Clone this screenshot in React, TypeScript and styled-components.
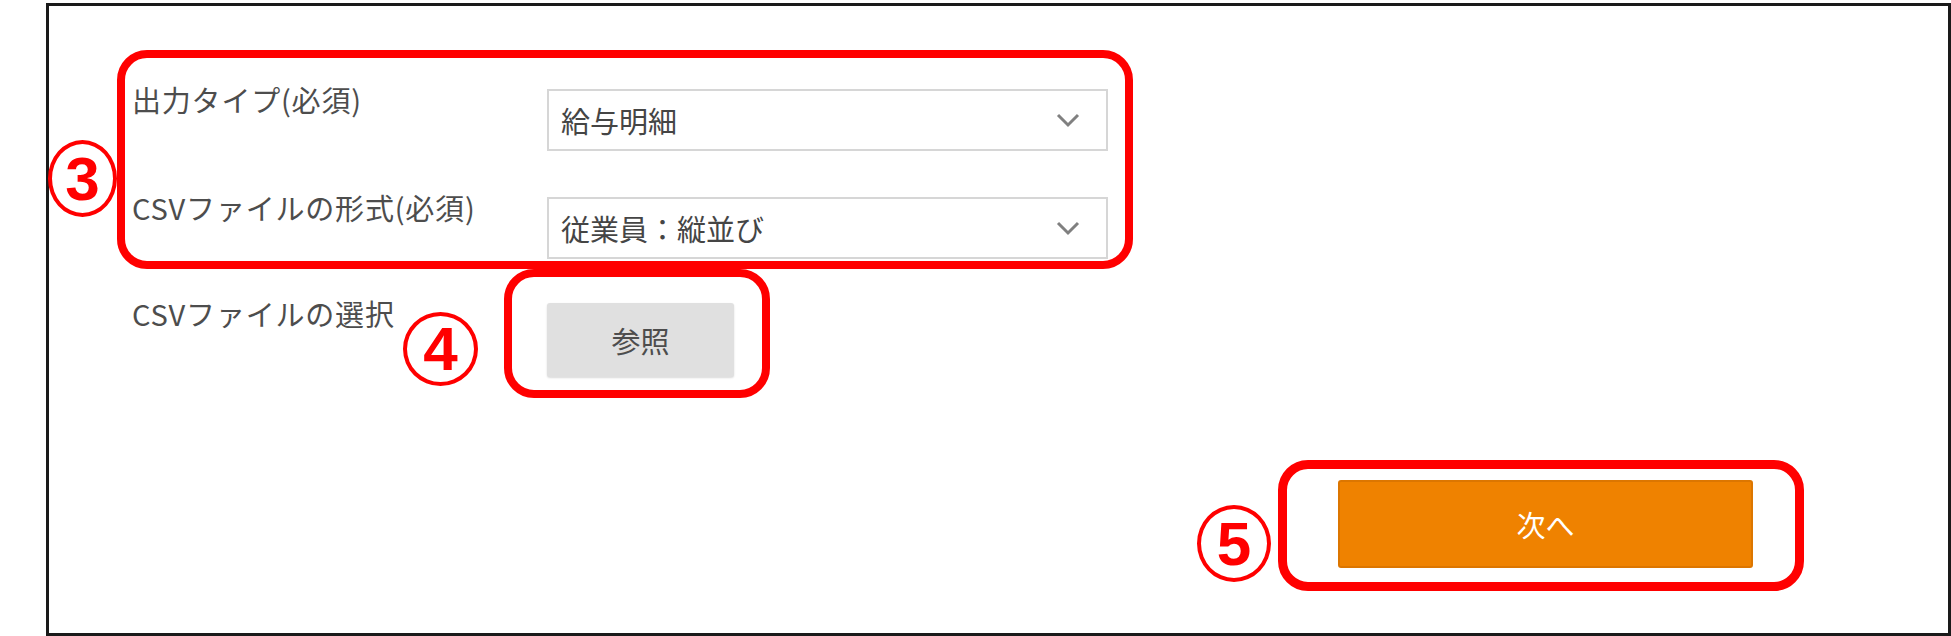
import React from 'react';
import styled, { createGlobalStyle } from 'styled-components';

const GlobalStyle = createGlobalStyle`
  html, body {
    margin: 0;
    padding: 0;
    background: #ffffff;
  }
  body {
    font-family: "Noto Sans CJK JP", "Noto Sans", sans-serif;
  }
`;

const Frame = styled.div`
  box-sizing: border-box;
  margin: 3px 0 0 46px;
  width: 1905px;
  height: 633px;
  border: 3px solid #1a1a1a;
  display: flex;
  flex-direction: column;
`;

const Callout = styled.div<{ $pad: string; $border?: number }>`
  position: relative;
  box-sizing: border-box;
  border: ${p => p.$border ?? 8}px solid #ff0000;
  border-radius: 30px;
  padding: ${p => p.$pad};
`;

const Badge = styled.div<{ $left: number; $top: number; $w: number; $h: number }>`
  position: absolute;
  left: ${p => p.$left}px;
  top: ${p => p.$top}px;
  width: ${p => p.$w}px;
  height: ${p => p.$h}px;
  box-sizing: border-box;
  border: 4px solid #ff0000;
  border-radius: 50%;
  display: flex;
  align-items: center;
  justify-content: center;
  color: #ff0000;
  font-family: "Liberation Sans", Arial, sans-serif;
  font-weight: bold;
  font-size: 62px;
  line-height: 1;
`;

const FieldGroup = styled(Callout)`
  margin: 44px 0 0 68px;
  width: 1016px;
  display: flex;
  flex-direction: column;
  gap: 36px;
`;

const Row = styled.div<{ $indent?: number }>`
  display: flex;
  align-items: flex-start;
  margin-left: ${p => p.$indent ?? 0}px;
`;

const Label = styled.div<{ $width: number; $offset?: number }>`
  width: ${p => p.$width}px;
  margin-top: ${p => p.$offset ?? 0}px;
  font-size: 29px;
  line-height: 40px;
  letter-spacing: 0.8px;
  color: #4d4d4d;
  white-space: nowrap;
`;

const Select = styled.div`
  box-sizing: border-box;
  width: 561px;
  height: 62px;
  margin-top: 10px;
  border: 2px solid #d6d6d6;
  background: #ffffff;
  display: flex;
  align-items: center;
  justify-content: space-between;
  padding: 0 26px 0 12px;
  font-size: 29px;
  color: #454545;
`;

const Chevron = () => (
  <svg width="24" height="15" viewBox="0 0 24 15">
    <polyline points="2,2 12,12 22,2" fill="none" stroke="#808080" strokeWidth="3" />
  </svg>
);

const GrayButton = styled.button`
  box-sizing: border-box;
  width: 187px;
  height: 74px;
  border: none;
  border-radius: 3px;
  background: #e0e0e0;
  box-shadow: 0 1px 2px rgba(0, 0, 0, 0.15);
  font-family: inherit;
  font-size: 29px;
  color: #4d4d4d;
  display: block;
`;

const Footer = styled.div`
  display: flex;
  justify-content: flex-end;
  margin-top: 62px;
  padding-right: 144px;
`;

const NextButton = styled.button`
  box-sizing: border-box;
  width: 415px;
  height: 88px;
  border: 2px solid #dc7600;
  border-radius: 3px;
  background: #ef8200;
  font-family: inherit;
  font-size: 29px;
  color: #ffffff;
  display: block;
`;

const fields = [
  { label: '出力タイプ(必須)', value: '給与明細' },
  { label: 'CSVファイルの形式(必須)', value: '従業員：縦並び' },
];

export default function App() {
  return (
    <>
      <GlobalStyle />
      <Frame>
        <FieldGroup $pad="21px 17px 2px 7px">
          <Badge $left={-77} $top={82} $w={69} $h={77}>3</Badge>
          {fields.map(f => (
            <Row key={f.label}>
              <Label $width={415}>{f.label}</Label>
              <Select>
                <span>{f.value}</span>
                <Chevron />
              </Select>
            </Row>
          ))}
        </FieldGroup>

        <Row $indent={83}>
          <Label $width={372} $offset={24}>CSVファイルの選択</Label>
          <Callout $pad="26px 28px 13px 35px">
            <Badge $left={-109} $top={35} $w={75} $h={74}>4</Badge>
            <GrayButton>参照</GrayButton>
          </Callout>
        </Row>

        <Footer>
          <Callout $pad="11px 42px 14px 51px" $border={9}>
            <Badge $left={-90} $top={36} $w={74} $h={77}>5</Badge>
            <NextButton>次へ</NextButton>
          </Callout>
        </Footer>
      </Frame>
    </>
  );
}
